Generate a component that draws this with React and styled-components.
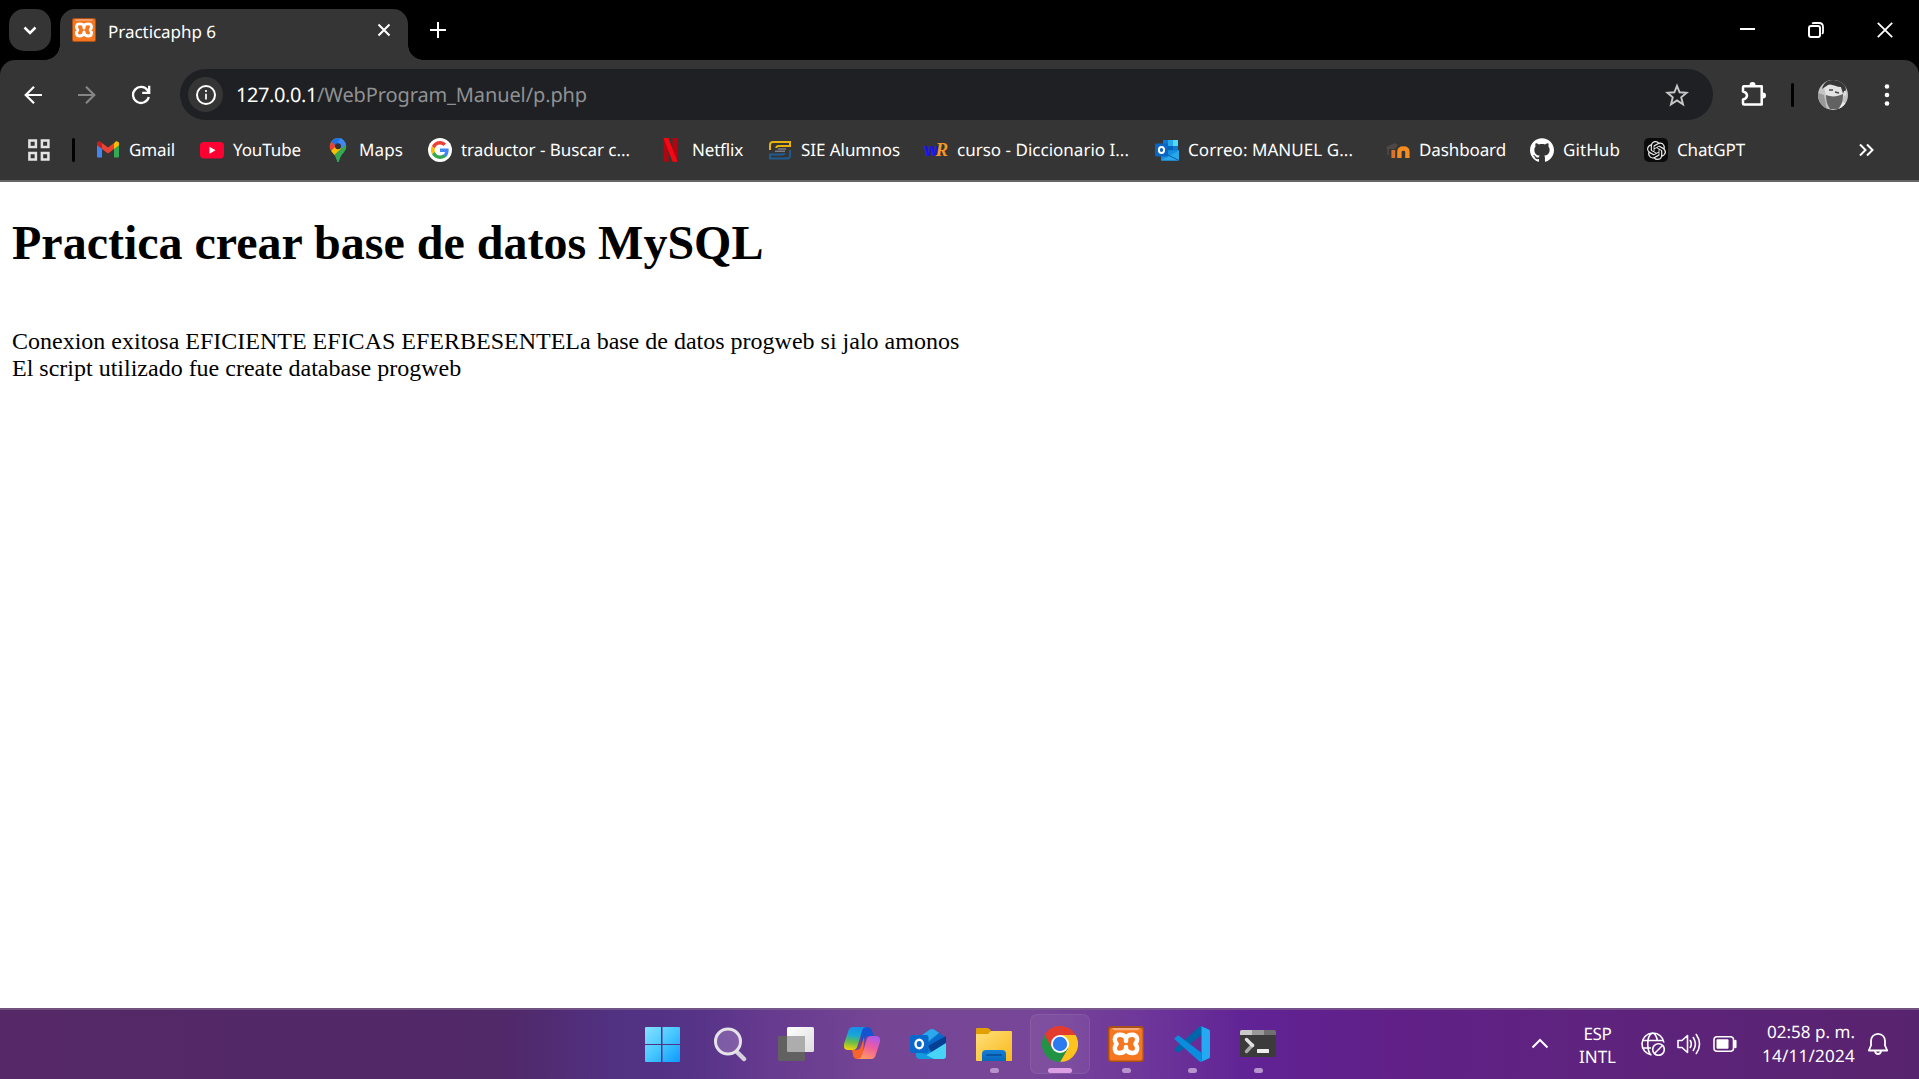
import React, { useLayoutEffect, useRef, useState } from "react";
import styled, { createGlobalStyle } from "styled-components";
import { SiGithub, SiOpenai } from "react-icons/si";

const ui = `"Noto Sans", "Open Sans", sans-serif`;

const Global = createGlobalStyle`
  * { box-sizing: border-box; }
  body { margin: 0; background: #fff; overflow: hidden; }
  svg { display: block; flex: none; }
`;

const Screen = styled.div`
  width: 1919px;
  height: 1079px;
  display: flex;
  flex-direction: column;
  font-family: ${ui};
  color: #fff;
`;

const TextBox = styled.span`
  display: block;
  flex: none;
  width: ${(p) => p.$width}px;
  white-space: nowrap;
  text-rendering: geometricPrecision;
  font-size: ${(p) => p.$size || 17}px;
  line-height: ${(p) => p.$line || 24}px;
  color: ${(p) => p.$color || "#fff"};
`;

// Keeps a label at a fixed width by spreading its letters evenly.
function Label({ width, children, ...rest }) {
  const ref = useRef(null);
  const [spacing, setSpacing] = useState(0);
  useLayoutEffect(() => {
    const natural = ref.current.getBoundingClientRect().width;
    setSpacing((width - natural) / String(children).length);
  }, [width, children]);
  return (
    <TextBox $width={width} {...rest}>
      <span ref={ref} style={{ letterSpacing: spacing }}>
        {children}
      </span>
    </TextBox>
  );
}

/* ---------- tab strip ---------- */

const TabStrip = styled.header`
  height: 60px;
  flex: none;
  display: flex;
  padding: 9px 0 0 9px;
  background: #000;
`;

const TabSearch = styled.button`
  width: 42px;
  height: 42px;
  padding: 0;
  border: 0;
  border-radius: 15px;
  background: #353535;
  display: grid;
  place-items: center;
`;

const Tab = styled.div`
  position: relative;
  width: 348px;
  height: 51px;
  margin-left: 9px;
  padding: 0 17px 9px 12px;
  border-radius: 15px 15px 0 0;
  background: #353535;
  display: flex;
  align-items: center;
  &::before,
  &::after {
    content: "";
    position: absolute;
    bottom: 0;
    width: 15px;
    height: 15px;
  }
  &::before {
    right: 100%;
    background: radial-gradient(circle at 0 0, transparent 14.5px, #353535 15px);
  }
  &::after {
    left: 100%;
    background: radial-gradient(circle at 100% 0, transparent 14.5px, #353535 15px);
  }
`;

const TabTitle = styled.div`
  flex: 1;
  padding: 3px 0 0 12px;
`;

const NewTab = styled.div`
  padding: 13px 0 0 22px;
`;

const WindowButtons = styled.div`
  margin-left: auto;
  display: flex;
  gap: 53px;
  padding: 13px 26px 0 0;
`;

/* ---------- toolbar ---------- */

const ToolbarBack = styled.div`
  flex: none;
  background: #000;
`;

const Chrome = styled.div`
  height: 122px;
  border-radius: 15px 15px 0 0;
  background: #353535;
  border-bottom: 2px solid #666;
`;

const Toolbar = styled.div`
  height: 69px;
  padding: 9px 0 9px 20px;
  display: flex;
  align-items: center;
`;

const NavButtons = styled.div`
  width: 160px;
  display: flex;
  align-items: center;
  gap: 29px;
`;

const Omnibox = styled.div`
  width: 1533px;
  height: 51px;
  border-radius: 26px;
  background: #1f2023;
  display: flex;
  align-items: center;
  padding: 0 24px 0 8px;
`;

const SiteInfo = styled.div`
  width: 35px;
  height: 35px;
  border-radius: 50%;
  background: #353535;
  display: grid;
  place-items: center;
  margin-right: 13px;
`;

const Address = styled.div`
  flex: 1;
  display: flex;
`;

const ToolbarEnd = styled.div`
  display: flex;
  align-items: center;
  padding-left: 27px;
`;

const Divider = styled.div`
  width: 3px;
  height: 24px;
  border-radius: 2px;
  background: #000;
  margin: ${(p) => p.$margin};
`;

const Bookmarks = styled.nav`
  height: 51px;
  display: flex;
  align-items: center;
  padding: 0 0 9px 27px;
`;

const Bookmark = styled.a`
  display: flex;
  align-items: center;
  gap: 9px;
  margin-right: ${(p) => p.$after ?? 25}px;
`;

const More = styled.div`
  margin-left: auto;
  padding-right: 45px;
`;

/* ---------- page ---------- */

const Page = styled.main`
  flex: 1;
  padding: 0 12px;
  background: #fff;
  color: #000;
  font: 24px/27px "Liberation Serif", "Times New Roman", serif;
`;

const Heading = styled.h1`
  margin: 33px 0 31px;
  font-size: 48px;
  line-height: 55px;
`;

/* ---------- taskbar ---------- */

const Taskbar = styled.footer`
  flex: none;
  height: 71px;
  border-top: 2px solid rgba(125, 100, 135, 0.7);
  background: linear-gradient(
      90deg,
      #562867 0%,
      #512868 26%,
      #513182 32%,
      #553387 36%,
      #663a8f 40%,
      #764695 46%,
      #774698 54%,
      #6d359a 60%,
      #612395 65%,
      #602087 73%,
      #5f2380 81%,
      #58236e 100%
    )
    border-box;
  display: grid;
  grid-template-columns: 631px 660px 1fr;
`;

const Apps = styled.div`
  grid-column: 2;
  display: flex;
`;

const AppCell = styled.div`
  width: 60px;
  height: 60px;
  margin: 4px 3px 0;
  padding: 12px ${(p) => p.$nudge || 0}px 0 0;
  border-radius: 7px;
  background: ${(p) => (p.$active ? "rgba(255,255,255,.06)" : "none")};
  box-shadow: ${(p) => (p.$active ? "inset 0 0 0 1px rgba(255,255,255,.07)" : "none")};
  display: flex;
  flex-direction: column;
  align-items: center;
`;

const Running = styled.div`
  width: ${(p) => (p.$active ? 24 : 9)}px;
  height: 5px;
  margin-top: 6px;
  border-radius: 3px;
  background: ${(p) => (p.$active ? "#dd9fe4" : "#b794cc")};
`;

const Tray = styled.div`
  display: flex;
  align-items: center;
  justify-content: flex-end;
  padding: 0 30px 2px 0;
`;

const Stack = styled.div`
  display: flex;
  flex-direction: column;
  align-items: ${(p) => p.$align};
  margin: ${(p) => p.$margin};
`;

const StatusIcons = styled.div`
  display: flex;
  align-items: center;
  gap: 12px;
`;

/* ---------- icons ---------- */

const Line = ({ w = 24, h = w, box, stroke = "#fff", sw = 2, children, ...p }) => (
  <svg width={w} height={h} viewBox={box || `0 0 ${w} ${h}`} fill="none" stroke={stroke} strokeWidth={sw} {...p}>
    {children}
  </svg>
);

const Xampp = ({ size }) => (
  <svg width={size} height={size} viewBox="0 0 36 36">
    <rect width="36" height="36" rx="3" fill="#a94f18" />
    <rect x="1.500" y="2" width="33" height="32.500" rx="2" fill="#f57720" />
    <path d="M4 2h28l-2 2.300H6z" fill="#f6ad7d" />
    <path
      d="M18 12.200C16.500 8 7 7 6.800 13c0 2.300.8 3.700 1.900 4.900C5.500 21.500 6.500 27 11 27c3.500 0 6-1 7-4 1 3 3.500 4 7 4 4.500 0 5.500-5.500 2.300-9.100 1.100-1.200 1.900-2.600 1.900-4.900C29 7 19.500 8 18 12.200z"
      fill="#f57720"
      stroke="#fff"
      strokeWidth="4.400"
      strokeLinejoin="round"
    />
    <path d="M18 13.500v1.500M18 22v-1" stroke="#fff" strokeWidth="4.500" strokeLinecap="round" />
  </svg>
);

const Gmail = () => (
  <svg width="24" height="24" viewBox="0 0 24 24">
    <path d="M1 6v12.2c0 .8.5 1.3 1.3 1.3H6V10z" fill="#4285f4" />
    <path d="M18 10v9.5h3.700c.8 0 1.300-.5 1.300-1.300V6z" fill="#34a853" />
    <path d="M18 5.500v5.500l5-3.800V5.500c0-2-2.200-3-3.800-1.800z" fill="#fbbc04" />
    <path d="M6 11V5l6 4.500L18 5v6l-6 4.600z" fill="#ea4335" />
    <path d="M1 5.500v1.700L6 11V5L4.800 3.700C3.200 2.500 1 3.500 1 5.500z" fill="#c5221f" />
  </svg>
);

const YouTube = () => (
  <svg width="24" height="24" viewBox="0 0 24 24">
    <rect y="4" width="24" height="16.500" rx="4" fill="#ff0033" />
    <path d="M9.500 8.800v7l6-3.500z" fill="#fff" />
  </svg>
);

const Maps = () => (
  <svg width="24" height="24" viewBox="0 0 24 24">
    <defs>
      <clipPath id="pin">
        <path d="M12 0a8.200 8.200 0 0 0-8.200 8.200c0 2.500 1 4.300 2.600 6.200 2.300 2.700 3.800 4.600 4.600 8.100.3 1.200.5 1.500 1 1.500s.8-.3 1.100-1.500c.8-3.500 2.300-5.500 4.500-8.100 1.600-1.900 2.600-3.700 2.600-6.200A8.200 8.200 0 0 0 12 0z" />
      </clipPath>
    </defs>
    <g clipPath="url(#pin)">
      <path d="M0 0h24v24H0z" fill="#34a853" />
      <path d="M0 0h8l4 8-9 8H0z" fill="#ea4335" />
      <path d="M3 15 14 4l4 4L6 19H0z" fill="#fbbc04" />
      <path d="M5 3 10 0h10l-8 8-2 0z" fill="#1a73e8" />
      <path d="m14.500 0-3 5 3.500 6 6-5-2-6z" fill="#4285f4" />
      <path d="M20 6 8 20l4 5 10-9V6z" fill="#34a853" />
    </g>
    <circle cx="12" cy="8.200" r="3" fill="#333" />
  </svg>
);

const Google = () => (
  <svg width="24" height="24" viewBox="0 0 24 24">
    <circle cx="12" cy="12" r="12" fill="#fff" />
    <g transform="translate(3 3) scale(.75)">
      <path fill="#4285f4" d="M23.500 12.300c0-.9-.1-1.500-.2-2.200H12v4.500h6.600c-.1 1.100-.9 2.800-2.500 3.900l3.900 3c2.200-2.100 3.500-5.200 3.500-9.200z" />
      <path fill="#34a853" d="M12 24c3.200 0 6-1.100 8-2.900l-3.900-3c-1 .7-2.400 1.200-4.100 1.200-3.200 0-5.800-2.100-6.800-5l-4 3.100C3.200 21.300 7.300 24 12 24z" />
      <path fill="#fbbc05" d="M5.200 14.300a7 7 0 0 1 0-4.700l-4-3.100a12 12 0 0 0 0 10.900z" />
      <path fill="#ea4335" d="M12 4.700c2.300 0 3.800 1 4.700 1.800l3.400-3.300C18 1.200 15.200 0 12 0 7.300 0 3.200 2.700 1.200 6.600l4 3.100c1-2.900 3.600-5 6.800-5z" />
    </g>
  </svg>
);

const Netflix = () => (
  <svg width="24" height="24" viewBox="0 0 24 24">
    <path d="M4.500 0h5v24l-5-.5zM13.500 0h5v24l-5-.5z" fill="#b1060f" />
    <path d="M4.500 0h5l9 24-5-.5z" fill="#f20914" />
  </svg>
);

const Sie = () => (
  <Line sw="2">
    <path d="M2 12V7q0-3 3-3h17v4H10.500Q8.500 8 8.200 10" stroke="#e5b30c" />
    <path d="M7 13.200h10M10 11h8" stroke="#7b7e84" strokeWidth="1.500" />
    <path d="M22 12v5.500q0 3-3 3H2v-4h12q2.200 0 2.500-1.500" stroke="#205b91" />
  </Line>
);

const WrMark = styled.span`
  width: 24px;
  height: 24px;
  display: flex;
  align-items: center;
  font: bold 17px/24px "Open Sans", sans-serif;
  letter-spacing: -3px;
  color: #1a13f5;
  i {
    font: italic bold 19px/22px "Liberation Serif", serif;
    color: #f79727;
  }
`;

const OutlookSmall = () => (
  <svg width="24" height="24" viewBox="0 0 24 24">
    <path d="M8 2h15v12H8z" fill="#0f78d4" />
    <path d="M13 2h5v6h-5z" fill="#28a8ea" />
    <path d="M18 2h5v6h-5z" fill="#50d9ff" />
    <path d="M13 8h5v5h-5z" fill="#0364b8" />
    <path d="M6 12.500 24 12v10.500H6z" fill="#1490df" />
    <path d="m6 22.500 18-10v10z" fill="#28a8ea" />
    <path d="m13 17 11 5.500" stroke="#0c5ca5" />
    <rect y="5.500" width="13" height="13" rx="1" fill="#0a66c2" />
    <ellipse cx="6.500" cy="12" rx="2.600" ry="3" fill="none" stroke="#fff" strokeWidth="1.900" />
  </svg>
);

const Moodle = () => (
  <svg width="24" height="24" viewBox="0 0 24 24" fill="none">
    <path d="M7.300 20v-8" stroke="#d9742a" strokeWidth="3.800" />
    <path d="M13.400 20v-6.200q0-3.300 4-3.300t4 3.300V20" stroke="#f68b1f" strokeWidth="4.400" />
    <path d="m0 9 9-4 3 2-3 4H2z" fill="#4d4745" />
    <path d="M2 10v7" stroke="#66544a" />
  </svg>
);

const GptTile = styled.span`
  width: 24px;
  height: 24px;
  border-radius: 5px;
  background: #0b0b0b;
  display: grid;
  place-items: center;
`;

const Avatar = () => (
  <svg width="30" height="30" viewBox="0 0 30 30">
    <defs>
      <clipPath id="face">
        <circle cx="15" cy="15" r="15" />
      </clipPath>
    </defs>
    <g clipPath="url(#face)">
      <path d="M0 0h30v30H0z" fill="#c4c4c4" />
      <path d="M0 13 6 15l3 15H0z" fill="#999" />
      <path d="M6 7 10 4l12 1 3 10-5 3-12-2z" fill="#e3e3e3" />
      <path d="M4 9C6 2 11-1 17 0c7 0 11 5 11 10l-3 3-2-6C18 7 13 3 10 5 8 6 6 8 4 9z" fill="#373737" />
      <path d="M8 15c5 2 11 2 17-1 0 6-1 11-5 15h-8c-3-4-4-9-4-14z" fill="#626262" />
      <path d="m11 10 4 0M17 12l4 1" stroke="#444" strokeWidth="1.300" />
      <path d="M26 11q3-1 2 4l-3 2" fill="#ddd" />
      <path d="m21 29 4-7 5 3v5z" fill="#eee" />
    </g>
  </svg>
);

const WindowsLogo = () => (
  <svg width="36" height="36" viewBox="0 0 36 36">
    <defs>
      <linearGradient id="win" gradientUnits="userSpaceOnUse" x1="0" y1="0" x2="36" y2="36">
        <stop stopColor="#8be2ff" />
        <stop offset=".5" stopColor="#49c8ff" />
        <stop offset="1" stopColor="#0b9bff" />
      </linearGradient>
    </defs>
    <g fill="url(#win)">
      <path d="M2 1h15v17H1V2q0-1 1-1zM18.500 1H35q1 0 1 1v16H18.500zM1 19h16v17H2q-1 0-1-1zM18.500 19H36v16q0 1-1 1H18.500z" />
    </g>
  </svg>
);

const SearchIcon = () => (
  <svg width="36" height="36" viewBox="0 0 36 36" fill="none">
    <path d="m25 26 7 7" stroke="#d5d2dc" strokeWidth="4.500" strokeLinecap="round" />
    <circle cx="16" cy="15.500" r="12.500" fill="#ad91ca" fillOpacity=".42" stroke="#e5e3e8" strokeWidth="3" />
  </svg>
);

const TaskView = () => (
  <svg width="36" height="36" viewBox="0 0 36 36">
    <defs>
      <linearGradient id="tv" x2="1" y2="1">
        <stop stopColor="#fff" />
        <stop offset="1" stopColor="#ddd" />
      </linearGradient>
    </defs>
    <rect x="9" y="1" width="27" height="25" rx="1.500" fill="url(#tv)" />
    <rect x="0" y="10" width="27" height="25" rx="1.500" fill="#616161" />
    <path d="M9 10h18v16H10.500Q9 26 9 24.500z" fill="#adadad" />
  </svg>
);

const Copilot = () => (
  <svg width="36" height="36" viewBox="0 0 36 36">
    <defs>
      <linearGradient id="cpA" x1=".4" x2=".25" y2="1">
        <stop stopColor="#168fe9" />
        <stop offset=".35" stopColor="#18a8d4" />
        <stop offset=".65" stopColor="#66bd48" />
        <stop offset="1" stopColor="#f5d20a" />
      </linearGradient>
      <linearGradient id="cpB" x1=".7" x2=".3" y2="1">
        <stop stopColor="#ad58ed" />
        <stop offset=".45" stopColor="#ee5ca0" />
        <stop offset="1" stopColor="#ff9965" />
      </linearGradient>
    </defs>
    <path d="M17 1h6q4 0 5 4l2 5h-5q-4 0-5 4l-3 8z" fill="#1653d1" />
    <path d="M19 33h-6q-3 0-4-4l-1-5h4q4 0 5-4l3-9z" fill="#f5642e" />
    <path d="M9 1h14q-4 0-5 4l-4.500 15q-1 4-5 4H4q-5 0-4-6L4 6q1-5 5-5z" fill="url(#cpA)" />
    <path d="M27 33H13q4 0 5-4l4.500-15q1-4 5-4H32q5 0 4 6l-4 12q-1 5-5 5z" fill="url(#cpB)" />
  </svg>
);

const Outlook = () => (
  <svg width="36" height="36" viewBox="0 0 36 36">
    <path d="M6 13 20 3.500q2-1 4 0L36 12v18q0 3-3 3H10q-4 0-4-4z" fill="#1381d8" />
    <path d="M8 12 20 3.500q2-1 4 0l5 3.500L12 20z" fill="#2ca9eb" />
    <path d="m17 18 12-11 7 5v3L20 26z" fill="#0869cb" />
    <path d="m18 20 18-10v8L22 27z" fill="#053f94" />
    <path d="m36 17-21 13-5 3h23q3 0 3-3z" fill="#48d4f7" />
    <path d="m6 24 18 9H10q-4 0-4-4z" fill="#149ade" />
    <rect y="9" width="18.500" height="18" rx="2" fill="#0968cb" />
    <ellipse cx="9.200" cy="18" rx="3.700" ry="4.300" fill="none" stroke="#fff" strokeWidth="2.400" />
  </svg>
);

const Explorer = () => (
  <svg width="36" height="36" viewBox="0 0 36 36">
    <defs>
      <linearGradient id="fold" x2="1" y2="1">
        <stop stopColor="#ffdf7a" />
        <stop offset="1" stopColor="#f9b91c" />
      </linearGradient>
      <linearGradient id="tray" x2="0" y2="1">
        <stop stopColor="#147fd8" />
        <stop offset="1" stopColor="#0868bb" />
      </linearGradient>
    </defs>
    <path d="M0 3q0-1 1-1h10q2 0 3 1.500L16 6v4H0z" fill="#dfa000" />
    <path d="M0 8h12l3-3h20q1 0 1 1v28.500q0 .5-1 .5H1q-1 0-1-1z" fill="url(#fold)" />
    <path d="M6 35v-7q0-4 4-4h16q4 0 4 4v7z" fill="url(#tray)" />
    <path d="M11 29h14" stroke="#064b8c" strokeWidth="1.700" strokeLinecap="round" />
  </svg>
);

const ChromeLogo = () => (
  <svg width="36" height="36" viewBox="0 0 36 36">
    <path d="M2.400 9A18 18 0 0 1 33.600 9H18L10.200 22.500z" fill="#e33b2e" />
    <path d="M33.600 9A18 18 0 0 1 18 36l7.800-13.500L18 9z" fill="#fcc31e" />
    <path d="M18 36A18 18 0 0 1 2.400 9l7.800 13.500 15.600 0z" fill="#229342" />
    <circle cx="18" cy="18" r="9" fill="#fff" />
    <circle cx="18" cy="18" r="7.200" fill="#2b7bf0" />
  </svg>
);

const VsCode = () => (
  <svg width="36" height="36" viewBox="0 0 36 36">
    <path d="M.6 23.800 3 26q1 .8 2.200 0L27 9.500V0q-1 0-1.800.8L.8 22.400q-.8.700-.2 1.400z" fill="#0065a9" />
    <path d="M.6 12.200 3 10q1-.8 2.200 0L27 26.500V36q-1 0-1.800-.8L.8 13.600q-.8-.7-.2-1.400z" fill="#0a8ddd" />
    <path d="m26.500 0 8.300 3.500q1.200.6 1.200 2v25q0 1.400-1.200 2L26.500 36q1-.5 1-2V2q0-1.500-1-2z" fill="#25a9f2" />
  </svg>
);

const Terminal = () => (
  <svg width="36" height="36" viewBox="0 0 36 36">
    <rect y="4" width="36" height="27" rx="1.500" fill="#3b3b3b" />
    <path d="M0 9V5.500Q0 4 1.500 4H12v5z" fill="#c9c9c9" />
    <path d="M12 4h12v5H12z" fill="#999" />
    <path d="M24 4h10.500Q36 4 36 5.500V9H24z" fill="#707070" />
    <path d="m12.500 19-6 6.500" stroke="#aaa" strokeWidth="3.400" strokeLinecap="round" />
    <path d="m6.500 13.500 6 6" stroke="#e2e2e2" strokeWidth="3.400" strokeLinecap="round" />
    <rect x="17" y="23" width="12" height="4" rx=".6" fill="#ededed" />
  </svg>
);

const bookmarks = [
  { icon: <Gmail />, text: "Gmail", width: 46 },
  { icon: <YouTube />, text: "YouTube", width: 68 },
  { icon: <Maps />, text: "Maps", width: 44 },
  { icon: <Google />, text: "traductor - Buscar c...", width: 169, after: 29 },
  { icon: <Netflix />, text: "Netflix", width: 51, after: 25 },
  { icon: <Sie />, text: "SIE Alumnos", width: 99, after: 24 },
  { icon: <WrMark>w<i>R</i></WrMark>, text: "curso - Diccionario I...", width: 172, after: 26 },
  { icon: <OutlookSmall />, text: "Correo: MANUEL G...", width: 165, after: 33 },
  { icon: <Moodle />, text: "Dashboard", width: 87, after: 24 },
  { icon: <SiGithub size={24} color="#fff" />, text: "GitHub", width: 57, after: 24 },
  { icon: <GptTile><SiOpenai size={19} color="#e8e8e8" /></GptTile>, text: "ChatGPT", width: 68 },
];

const apps = [
  { icon: <WindowsLogo />, nudge: 4 },
  { icon: <SearchIcon /> },
  { icon: <TaskView /> },
  { icon: <Copilot /> },
  { icon: <Outlook /> },
  { icon: <Explorer />, running: true },
  { icon: <ChromeLogo />, running: true, active: true },
  { icon: <Xampp size={36} />, running: true },
  { icon: <VsCode />, running: true },
  { icon: <Terminal />, running: true },
];

export default function App() {
  return (
    <Screen>
      <Global />
      <TabStrip>
        <TabSearch>
          <Line w={14} h={9} sw={2.500}>
            <path d="m1.500 1.500 5.500 5.500 5.500-5.500" />
          </Line>
        </TabSearch>
        <Tab>
          <Xampp size={24} />
          <TabTitle>
            <Label width={108}>Practicaphp 6</Label>
          </TabTitle>
          <Line w={14} sw={2}>
            <path d="m1.500 1.500 11 11m0-11-11 11" />
          </Line>
        </Tab>
        <NewTab>
          <Line w={16} sw={2}>
            <path d="M8 0v16M0 8h16" />
          </Line>
        </NewTab>
        <WindowButtons>
          <Line w={16} sw={2}>
            <path d="M1 7h15" />
          </Line>
          <Line w={16} sw={2}>
            <rect x="1" y="4" width="11" height="11" rx="2" />
            <path d="M4 1.500Q5 1 6 1h5q4 0 4 4v5q0 1-.8 2" strokeWidth="1.800" />
          </Line>
          <Line w={16} sw={1.800}>
            <path d="m.8.8 14.400 14.400m0-14.400L.8 15.200" />
          </Line>
        </WindowButtons>
      </TabStrip>

      <ToolbarBack>
        <Chrome>
          <Toolbar>
            <NavButtons>
              <Line w={26} h={20} sw={2.200}>
                <path d="M22 10H6m8-8.300L5.700 10l8.300 8.300" />
              </Line>
              <Line w={26} h={20} sw={2.200} stroke="#858585">
                <path d="M3 10h16M11 1.700l8.300 8.300-8.300 8.300" />
              </Line>
              <Line w={22} h={20} sw={2.300}>
                <path d="M18.800 12a8 8 0 1 1-1.200-6.700l1 1.300M19.200.8v7h-7" />
              </Line>
            </NavButtons>
            <Omnibox>
              <SiteInfo>
                <Line w={20} sw={2}>
                  <circle cx="10" cy="10" r="9" />
                  <path d="M10 8.800v5.700M10 5v2" strokeWidth="1.700" />
                </Line>
              </SiteInfo>
              <Address>
                <Label width={81} $size={20} $line={28}>127.0.0.1</Label>
                <Label width={270} $size={20} $line={28} $color="#8f9193">/WebProgram_Manuel/p.php</Label>
              </Address>
              <Line w={24} sw={1.900} stroke="#c7c7c7">
                <path d="m12 2.800 2.600 6.500 7 .5-5.400 4.500 1.800 7L12 17.400l-6 3.900 1.800-7-5.400-4.500 7-.5z" />
              </Line>
            </Omnibox>
            <ToolbarEnd>
              <Line w={26} h={26} sw={2.500}>
                <path d="M3.500 4.300h18.200v18.200H4q-1 0-1-1v-4q4-1 4-4t-4-4v-4q0-1 .5-1.200z" strokeLinejoin="round" />
                <path d="M9.500 3a3 3 0 0 1 6 0v1h-6zM23 10.500a3 3 0 0 1 0 6z" fill="#fff" stroke="none" />
              </Line>
              <Divider $margin="0 24px 0 25px" />
              <Avatar />
              <Line w={6} h={24} stroke="none" style={{ marginLeft: 36 }}>
                <circle cx="3" cy="3.500" r="2.300" fill="#fff" />
                <circle cx="3" cy="12" r="2.300" fill="#fff" />
                <circle cx="3" cy="20.500" r="2.300" fill="#fff" />
              </Line>
            </ToolbarEnd>
          </Toolbar>
          <Bookmarks>
            <Line w={24} sw={2.500} stroke="#e3e3e3">
              <path d="M2.400 2.400h6.500v6.500H2.400zM14.900 2.400h6.500v6.500h-6.500zM2.400 14.900h6.500v6.500H2.400zM14.900 14.900h6.500v6.500h-6.500z" />
            </Line>
            <Divider $margin="0 21px 0 21px" />
            {bookmarks.map((b) => (
              <Bookmark key={b.text} $after={b.after}>
                {b.icon}
                <Label width={b.width}>{b.text}</Label>
              </Bookmark>
            ))}
            <More>
              <Line w={16} h={14} sw={2}>
                <path d="m2 1.500 5.500 5.500L2 12.500M9 1.500 14.500 7 9 12.500" />
              </Line>
            </More>
          </Bookmarks>
        </Chrome>
      </ToolbarBack>

      <Page>
        <Heading>Practica crear base de datos MySQL</Heading>
        <br />
        Conexion exitosa EFICIENTE EFICAS EFERBESENTELa base de datos progweb si jalo amonos
        <br />
        El script utilizado fue create database progweb
      </Page>

      <Taskbar>
        <Apps>
          {apps.map((a, i) => (
            <AppCell key={i} $active={a.active} $nudge={a.nudge}>
              {a.icon}
              {a.running && <Running $active={a.active} />}
            </AppCell>
          ))}
        </Apps>
        <Tray>
          <Line w={18} h={11} sw={2}>
            <path d="m1.500 9.500 7.500-7.500 7.500 7.500" />
          </Line>
          <Stack $align="center" $margin="2px 25px 0 30px">
            <Label width={28} $line={23}>ESP</Label>
            <Label width={37} $line={23}>INTL</Label>
          </Stack>
          <StatusIcons>
            <Line w={24} sw={1.600}>
              <path d="M10.500 22.900A11 11 0 1 1 22.900 10.500M9 22Q6 17 7 8q1-6 5-7 3 1 4.600 8M1.500 8.500h21M1.500 16H10" />
              <circle cx="17.500" cy="17.500" r="5.800" />
              <path d="m13.500 21.500 8-8" />
            </Line>
            <Line w={24} sw={1.600}>
              <path d="M1 8.500h4l5.500-5v17L5 15.500H1z" strokeLinejoin="round" />
              <path d="M13.300 8.500q2 3.500 0 7M16.300 5.500q4.200 6.500 0 13M19.300 2.500q6.500 9.500 0 19" strokeLinecap="round" />
            </Line>
            <Line w={24} sw={1.600}>
              <rect x="1" y="4.800" width="19.500" height="14.400" rx="3" />
              <rect x="3.500" y="7.300" width="12" height="9.400" rx="1" fill="#fff" stroke="none" />
              <path d="M22.300 9v6" strokeWidth="2.500" strokeLinecap="round" />
            </Line>
          </StatusIcons>
          <Stack $align="flex-end" $margin="0 12px 0 25px">
            <Label width={88} $line={24}>02:58 p. m.</Label>
            <Label width={93} $line={24}>14/11/2024</Label>
          </Stack>
          <Line w={22} h={24} sw={1.800}>
            <path d="M11 1.800c-4.500 0-7 3.500-7 7.200v4.500L1.800 18.500h18.400L18 13.500V9c0-3.700-2.500-7.200-7-7.200zM8 19q.5 3 3 3t3-3" strokeLinejoin="round" />
          </Line>
        </Tray>
      </Taskbar>
    </Screen>
  );
}
